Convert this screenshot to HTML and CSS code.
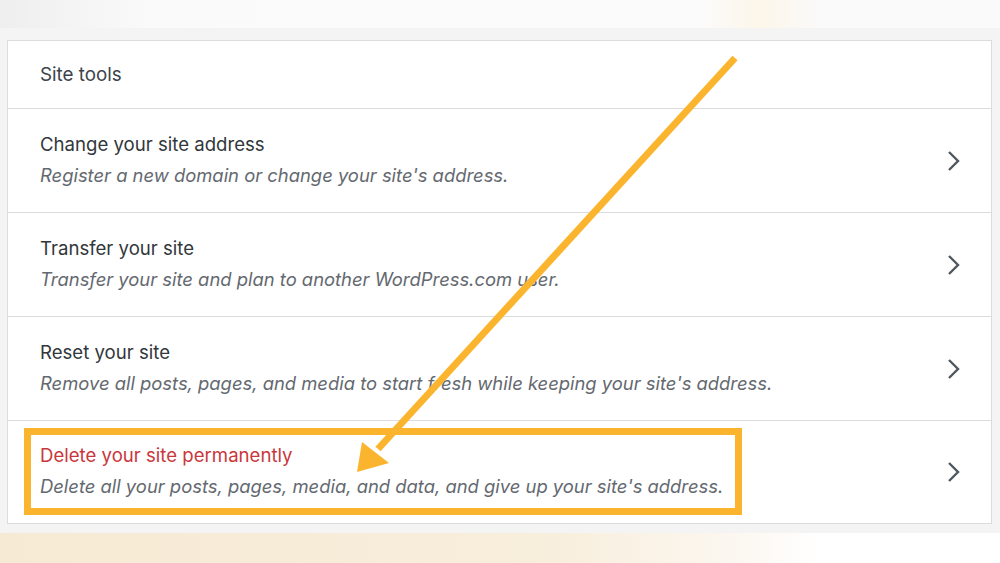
FILE: index.html
```html
<!DOCTYPE html>
<html lang="en">
<head>
    <meta charset="UTF-8">
    <meta name="viewport" content="width=device-width, initial-scale=1.0">
    <title>Site tools</title>
    <link rel="stylesheet" href="styles.css">
</head>
<body>
    <div class="topBand"></div>
    <div class="page">
        <div class="card">
            <div class="cardHeader">Site tools</div>
            <div class="toolRow">
                <div class="toolText">
                    <div class="toolTitle">Change your site address</div>
                    <div class="toolDesc">Register a new domain or change your site's address.</div>
                </div>
                <svg class="chevron" viewBox="0 0 14 22"><path d="M2 2 L11 11 L2 20" /></svg>
            </div>
            <div class="toolRow">
                <div class="toolText">
                    <div class="toolTitle">Transfer your site</div>
                    <div class="toolDesc">Transfer your site and plan to another WordPress.com user.</div>
                </div>
                <svg class="chevron" viewBox="0 0 14 22"><path d="M2 2 L11 11 L2 20" /></svg>
            </div>
            <div class="toolRow">
                <div class="toolText">
                    <div class="toolTitle">Reset your site</div>
                    <div class="toolDesc">Remove all posts, pages, and media to start fresh while keeping your site's address.</div>
                </div>
                <svg class="chevron" viewBox="0 0 14 22"><path d="M2 2 L11 11 L2 20" /></svg>
            </div>
            <div class="toolRow lastRow">
                <div class="toolText">
                    <div class="toolTitle danger">Delete your site permanently</div>
                    <div class="toolDesc">Delete all your posts, pages, media, and data, and give up your site's address.</div>
                </div>
                <svg class="chevron" viewBox="0 0 14 22"><path d="M2 2 L11 11 L2 20" /></svg>
                <div class="highlightBox"></div>
            </div>
        </div>
    </div>
    <div class="bottomBand"></div>

    <!-- annotation arrow drawn over the card -->
    <svg class="arrow" viewBox="0 0 1000 563" width="1000" height="563">
        <line x1="735" y1="58" x2="378" y2="449" stroke="#fbb42e" stroke-width="7" />
        <polygon points="357,472 362,442 389,463" fill="#fbb42e" />
    </svg>
</body>
</html>
```

FILE: styles.css
```css
body {
    margin: 0;
    width: 1000px;
    height: 563px;
    overflow: hidden;
    background: #f4f4f5;
    font-family: Inter, "Noto Sans", sans-serif;
    position: relative;
}

.topBand {
    height: 28px;
    background: linear-gradient(90deg, #eeeeee 0%, #fafafa 15%, #fbfbfb 70%, #fdf6ea 76%, #fafafa 82%, #fafafa 100%);
}

.page {
    padding: 12px 8px 0 7px;
    height: 493px;
}

.card {
    background: #fff;
    border: 1px solid #dcdcde;
}

.cardHeader {
    height: 67px;
    padding-left: 32px;
    display: flex;
    align-items: center;
    font-size: 18.8px;
    color: #3c434a;
    border-bottom: 1px solid #dcdcde;
}

.toolRow {
    height: 103px;
    border-bottom: 1px solid #dcdcde;
    display: flex;
    align-items: center;
    padding: 0 30px 0 32px;
    position: relative;
}

.lastRow {
    border-bottom: none;
    height: 102px;
}

.toolText {
    flex: 1;
    padding-bottom: 2px;
}

.toolTitle {
    font-size: 18.6px;
    line-height: 31px;
    color: #32373c;
}

.toolTitle.danger {
    color: #c9373c;
}

.toolDesc {
    font-size: 18.4px;
    line-height: 31px;
    font-style: italic;
    color: #646970;
}

.chevron {
    width: 14px;
    height: 22px;
    fill: none;
    stroke: #50575e;
    stroke-width: 2.4;
}

.highlightBox {
    position: absolute;
    left: 16px;
    top: 7px;
    width: 704px;
    height: 73px;
    border: 7px solid #fbb42e;
}

.bottomBand {
    height: 30px;
    background: linear-gradient(90deg, #f6ead4 0%, #f8eedc 55%, #fbf6ee 72%, #ffffff 82%);
}

.arrow {
    position: absolute;
    left: 0;
    top: 0;
    pointer-events: none;
}
```
